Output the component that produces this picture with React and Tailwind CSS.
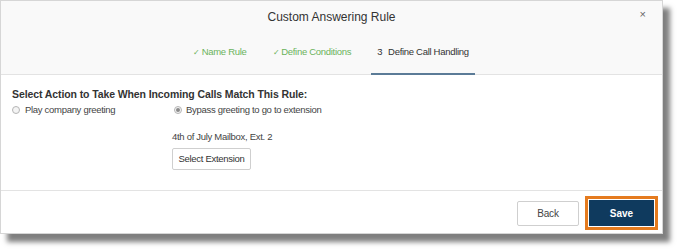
import React from 'react';

const font = { fontFamily: '"Liberation Sans", Arial, sans-serif' };

const steps = [
  { label: 'Name Rule', done: true },
  { label: 'Define Conditions', done: true },
  { label: 'Define Call Handling', num: 3, active: true },
];

function Radio({ checked }) {
  return (
    <span className="w-[8px] h-[8px] rounded-full border border-[#b5b5b5] bg-[#f4f4f4] flex items-center justify-center shrink-0">
      {checked && <span className="w-[4px] h-[4px] rounded-full bg-[#8a8a8a]" />}
    </span>
  );
}

export default function App() {
  return (
    <div className="w-[678px] h-[250px] bg-white overflow-hidden" style={font}>
      <div className="w-[663px] h-[234px] border border-[#d6d6d6] bg-white flex flex-col shadow-[7px_8px_5px_rgba(0,0,0,0.5)]">
        {/* header */}
        <div className="relative h-[74px] bg-[#f9f9f9] border-b border-[#e3e3e3] flex flex-col shrink-0">
          <div className="pt-[9px] text-center text-[12px] leading-[14px] text-[#333]">Custom Answering Rule</div>
          <button className="absolute right-[16px] top-[7px] text-[11px] leading-[12px] text-[#666]">×</button>
          <div className="mt-auto flex gap-[14px] pl-[186px] -mb-px">
            {steps.map(s => (
              <div key={s.label}
                className={`px-[6px] pb-[14px] text-[9.5px] tracking-[-0.3px] leading-[13px] border-b-2 ${s.active ? 'border-[#5b7b97] text-[#333]' : 'border-transparent text-[#6bb35c]'}`}>
                {s.done && <span className="text-[8px] mr-[2px]">✓</span>}
                {s.num && <span className="mr-[6px]">{s.num}</span>}
                {s.label}
              </div>
            ))}
          </div>
        </div>

        {/* body */}
        <div className="flex-1 px-[11px] pt-[13px] text-[9.5px] tracking-[-0.3px] text-[#444]">
          <div className="font-bold text-[10.5px] tracking-[-0.1px] leading-[13px] text-[#333]">Select Action to Take When Incoming Calls Match This Rule:</div>
          <div className="grid grid-cols-[160px_1fr] mt-[2px]">
            <div className="flex items-center gap-[5px] h-[14px]">
              <Radio />
              <span>Play company greeting</span>
            </div>
            <div>
              <div className="flex items-center gap-[4px] h-[14px] pl-[2px]">
                <Radio checked />
                <span>Bypass greeting to go to extension</span>
              </div>
              <div className="mt-[13px] leading-[13px] text-[#444]">4th of July Mailbox, Ext. 2</div>
              <button className="mt-[5px] w-[79px] h-[22px] border border-[#cfcfcf] rounded-[2px] bg-white text-[9.5px] tracking-[-0.3px] text-[#333]">Select Extension</button>
            </div>
          </div>
        </div>

        {/* footer */}
        <div className="h-[43px] border-t border-[#e3e3e3] flex items-center justify-end pr-[4px] pt-[2px] gap-[6px] shrink-0">
          <button className="w-[62px] h-[25px] border border-[#cfcfcf] rounded-[2px] bg-white text-[10px] tracking-[-0.2px] text-[#444]">Back</button>
          <div className="border-[3px] border-[#e57b1e] p-px bg-white">
            <button className="w-[65px] h-[26px] bg-[#0f3a5e] text-white text-[10px] font-bold">Save</button>
          </div>
        </div>
      </div>
    </div>
  );
}
